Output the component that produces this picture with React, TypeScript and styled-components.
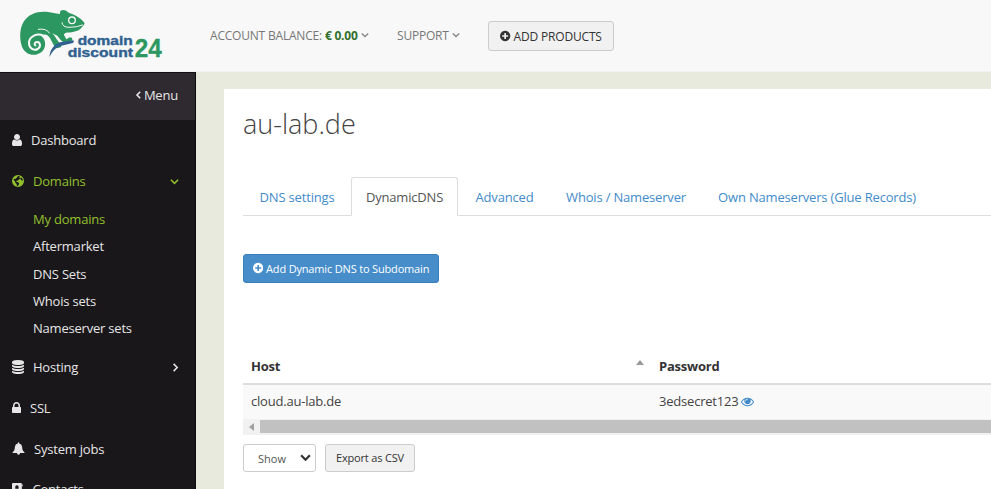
import React from "react";
import styled, { createGlobalStyle, css } from "styled-components";

const GlobalStyle = createGlobalStyle`
  * { box-sizing: border-box; }
  html, body { margin: 0; padding: 0; overflow: hidden; }
  body { font-family: "Open Sans", "Noto Sans", sans-serif; font-size: 13px; letter-spacing: -0.21px; color: #444; background: #e7eadd; }
  ul { list-style: none; margin: 0; padding: 0; }
`;

const icons = {
  user: { x: 256, w: 1280, d: "M1536 1399q0 109-62.5 187t-150.5 78h-854q-88 0-150.5-78t-62.5-187q0-85 8.5-160.5t31.5-152 58.5-131 94-89 134.5-34.5q131 128 313 128t313-128q76 0 134.5 34.5t94 89 58.5 131 31.5 152 8.5 160.5zm-256-887q0 159-112.5 271.5t-271.5 112.5-271.5-112.5-112.5-271.5 112.5-271.5 271.5-112.5 271.5 112.5 112.5 271.5z" },
  plus: { x: 128, w: 1536, d: "M1344 960v-128q0-26-19-45t-45-19h-256v-256q0-26-19-45t-45-19h-128q-26 0-45 19t-19 45v256h-256q-26 0-45 19t-19 45v128q0 26 19 45t45 19h256v256q0 26 19 45t45 19h128q26 0 45-19t19-45v-256h256q26 0 45-19t19-45zm320-64q0 209-103 385.5t-279.5 279.5-385.5 103-385.5-103-279.5-279.5-103-385.5 103-385.5 279.5-279.5 385.5-103 385.5 103 279.5 279.5 103 385.5z" },
  eye: { x: 0, w: 1792, d: "M1664 960q-152-236-381-353 61 104 61 225 0 185-131.5 316.5t-316.5 131.5-316.5-131.5-131.5-316.5q0-121 61-225-229 117-381 353 133 205 333.5 326.5t434.5 121.5 434.5-121.5 333.5-326.5zm-720-384q0-20-14-34t-34-14q-125 0-214.5 89.5t-89.5 214.5q0 20 14 34t34 14 34-14 14-34q0-86 61-147t147-61q20 0 34-14t14-34zm848 384q0 34-20 69-140 230-376.5 368.5t-499.5 138.5-499.5-139-376.5-368q-20-35-20-69t20-69q140-229 376.5-368t499.5-139 499.5 139 376.5 368q20 35 20 69z" },
  lock: { x: 320, w: 1152, d: "M640 768h512v-192q0-106-75-181t-181-75-181 75-75 181v192zm832 96v576q0 40-28 68t-68 28h-960q-40 0-68-28t-28-68v-576q0-40 28-68t68-28h32v-192q0-184 132-316t316-132 316 132 132 316v192h32q40 0 68 28t28 68z" },
  database: { x: 128, w: 1536, d: "M896 768q237 0 443-43t325-127v170q0 69-103 128t-280 93.5-385 34.5-385-34.5-280-93.5-103-128v-170q119 84 325 127t443 43zm0 768q237 0 443-43t325-127v170q0 69-103 128t-280 93.5-385 34.5-385-34.5-280-93.5-103-128v-170q119 84 325 127t443 43zm0-384q237 0 443-43t325-127v170q0 69-103 128t-280 93.5-385 34.5-385-34.5-280-93.5-103-128v-170q119 84 325 127t443 43zm0-1152q208 0 385 34.5t280 93.5 103 128v128q0 69-103 128t-280 93.5-385 34.5-385-34.5-280-93.5-103-128v-128q0-69 103-128t280-93.5 385-34.5z" },
  bell: { x: 64, w: 1664, d: "M896 40q70 0 90 70v80q330 60 370 420 10 240 70 420 70 160 230 290v100h-560q0 190-200 210-200-20-200-210h-560v-100q160-130 230-290 60-180 70-420 40-360 370-420v-80q20-70 90-70z" },
  globe: { x: 128, w: 1536, d: "M896 128a768 768 0 1 0 0 1536a768 768 0 1 0 0-1536z M880 250l240 50-60 150 130 90-160 180-150 50-70 160-170-90 20 130 180 60 210 110-40 190-170 230-90-30-20-240-160-150-60-200-170-170 40-160 200 30 90-130 110-60z M1270 420l190 190 60 250-150-40-130-130-30-160z" },
  contacts: { x: 230, w: 1460, d: "M360 128h1000q130 0 130 130v1278q0 130-130 130h-1000q-130 0-130-130v-1278q0-130 130-130z M860 430a220 220 0 1 0 1 0z M480 1280h770q0-420-210-450-180 130-350 0-210 30-210 450z M1560 300h130v290h-130z" },
} as const;

type IconName = keyof typeof icons;

const IconSvg = styled.svg`
  display: block;
  flex: none;
  fill: currentColor;
`;

function Icon({ name, size }: { name: IconName; size: number }) {
  const { x, w, d } = icons[name];
  return (
    <IconSvg width={(size * w) / 1792} height={size} viewBox={`${x} 0 ${w} 1792`}>
      <path fillRule="evenodd" d={d} />
    </IconSvg>
  );
}

function Chevron({ dir, size = 8, weight = 1.7 }: { dir: "left" | "right" | "down"; size?: number; weight?: number }) {
  const d = { left: "M6.5 1 2.5 5l4 4", right: "M4 1l4 4-4 4", down: "M1 3l4 4 4-4" }[dir];
  return (
    <IconSvg width={size} height={size} viewBox="0 0 10 10">
      <path d={d} fill="none" stroke="currentColor" strokeWidth={weight} />
    </IconSvg>
  );
}

const Page = styled.div`
  height: 489px;
  display: flex;
  flex-direction: column;
  overflow: hidden;
`;

const Header = styled.header`
  height: 72px;
  flex: none;
  display: flex;
  background: #f8f8f8;
  border-bottom: 1px solid #f0f1ec;
`;

const LogoSvg = styled.svg`
  display: block;
  flex: none;
  letter-spacing: 0;
  font-family: "Liberation Sans", Arial, sans-serif;
  font-weight: 700;
`;

const TopLink = styled.a<{ $width: number }>`
  display: flex;
  align-items: center;
  width: ${(p) => p.$width}px;
  height: 70px;
  font-size: 12px;
  letter-spacing: -0.2px;
  color: #777;
  white-space: pre;
  svg { margin-left: 3px; color: #888; }
`;

const Balance = styled.b`
  color: #31702f;
  font-weight: 700;
`;

const Button = styled.button<{ $kind: "plain" | "primary" | "small" }>`
  display: flex;
  align-items: center;
  justify-content: center;
  gap: 3px;
  padding: 0;
  font-family: inherit;
  letter-spacing: -0.17px;
  border-radius: 3px;
  white-space: nowrap;
  background: #f1f1f1;
  border: 1px solid #ccc;
  color: #333;
  ${(p) => p.$kind === "plain" && css`width: 126px; height: 30px; margin-top: 21px; font-size: 12px;`}
  ${(p) => p.$kind === "primary" && css`
    width: 196px; height: 29px; font-size: 11px; padding-bottom: 1px;
    background: #468dca; border-color: #3a7fbc; color: #fff;
  `}
  ${(p) => p.$kind === "small" && css`width: 90px; height: 28px; font-size: 11px; padding-bottom: 1px;`}
`;

const Body = styled.div`
  flex: 1;
  display: flex;
  min-height: 0;
`;

const Sidebar = styled.nav`
  width: 196px;
  flex: none;
  background: #1a171a;
  border-top: 1px solid #151217;
  border-right: 1px solid #0c0a0d;
  color: #e6e6e6;
  overflow: hidden;
`;

const MenuToggle = styled.div`
  height: 47px;
  display: flex;
  align-items: center;
  justify-content: flex-end;
  gap: 1px;
  padding: 0 17px 3px 0;
  background: #2f2930;
`;

const NavItem = styled.li<{ $active?: boolean }>`
  height: 40.7px;
  display: flex;
  align-items: center;
  gap: 9px;
  padding: 0 16px 0 12px;
  color: ${(p) => (p.$active ? "#93c02d" : "#e6e6e6")};
`;

const NavLabel = styled.span`
  flex: 1;
`;

const SubNav = styled.ul`
  padding: 5px 0 5px 33px;
`;

const SubItem = styled.li<{ $active?: boolean }>`
  height: 27.1px;
  line-height: 27px;
  color: ${(p) => (p.$active ? "#93c02d" : "#e6e6e6")};
`;

const Content = styled.main`
  flex: 1;
  min-width: 0;
  padding: 17px 0 0 28px;
  background: #e7eadd;
  display: flex;
`;

const Panel = styled.section`
  flex: 1;
  min-width: 0;
  background: #fff;
  padding-left: 19px;
`;

const Title = styled.h1`
  margin: 0;
  height: 88px;
  padding-top: 16px;
  font-size: 27px;
  letter-spacing: 0;
  line-height: 37px;
  font-weight: 300;
  color: #444;
`;

const Tabs = styled.div`
  display: flex;
  height: 39px;
  margin-bottom: 38px;
  border-bottom: 1px solid #ddd;
  letter-spacing: -0.18px;
`;

const Tab = styled.a<{ $active?: boolean; $width: number }>`
  width: ${(p) => p.$width}px;
  height: 39px;
  flex: none;
  display: flex;
  align-items: center;
  justify-content: center;
  padding-top: 1px;
  color: ${(p) => (p.$active ? "#555" : "#428bca")};
  border: 1px solid transparent;
  border-radius: 3px 3px 0 0;
  ${(p) => p.$active && css`
    background: #fff;
    border-color: #ddd #ddd #fff;
  `}
`;

const Row = styled.div<{ $head?: boolean }>`
  display: grid;
  grid-template-columns: 408px 1fr;
  align-items: center;
  height: ${(p) => (p.$head ? 36 : 34)}px;
  margin-top: ${(p) => (p.$head ? 66 : 0)}px;
  padding-bottom: ${(p) => (p.$head ? 0 : 2)}px;
  font-weight: ${(p) => (p.$head ? 700 : 400)};
  color: ${(p) => (p.$head ? "#333" : "#444")};
  background: ${(p) => (p.$head ? "#fff" : "#f9f9f9")};
  border-bottom: ${(p) => (p.$head ? "2px solid #ddd" : "none")};
`;

const Cell = styled.div`
  display: flex;
  align-items: center;
  gap: 3px;
  padding: 0 7px 0 8px;
  svg { color: #428bca; }
`;

const SortArrow = styled.i`
  margin: 0 0 7px auto;
  border: 4px solid transparent;
  border-top: 0;
  border-bottom: 5px solid #999;
`;

const ScrollTrack = styled.div`
  height: 16px;
  display: flex;
  align-items: center;
  padding-bottom: 1px;
  background: #f1f1f1;
`;

const ScrollArrow = styled.i`
  margin: 0 6px 0 6px;
  border: 4px solid transparent;
  border-left: 0;
  border-right: 5px solid #a0a0a0;
`;

const ScrollThumb = styled.div`
  flex: 1;
  height: 13px;
  background: #c1c1c1;
`;

const Footer = styled.div`
  display: flex;
  gap: 9px;
  margin-top: 9px;
`;

const Select = styled.div`
  width: 73px;
  height: 28px;
  display: flex;
  align-items: center;
  justify-content: space-between;
  padding: 1px 4px 0 14px;
  border: 1px solid #ccc;
  border-radius: 3px;
  font-size: 11px;
  letter-spacing: 0;
  color: #555;
  svg { color: #333; margin-bottom: 2px; }
`;

function Logo() {
  return (
    <LogoSvg width="210" height="72" viewBox="0 0 630 216">
      <path
        fill="#2c9760"
        d="M180 42C179 35 181 31 188 30C196 30 202 34 206 38C226 44 242 54 252 67Q256 72 251 76L241 87C231 95 212 98 198 98Q191 100 192 105L199 118L209 112Q217 112 217 119L212 126L190 127Q182 121 172 107L157 100Q163 106 169 116L183 135L184 141L171 145L162 137L150 114C144 106 138 103 133 104C124 105 121 107 127 111C138 121 139 143 126 155C105 172 76 165 66 140C57 113 60 85 70 67C86 38 119 32 145 36Q167 40 180 42Z"
      />
      <g fill="none" stroke="#f8f8f8" strokeLinecap="round">
        <path strokeWidth="6" d="M131 107C109 98 87 110 87 129C87 146 102 153 113 147C124 140 121 126 111 126C104 126 102 132 106 136" />
        <path strokeWidth="3" d="M115 88Q140 84 148 99" />
        <path strokeWidth="3" d="M186 68C187 77 194 82 207 82Q231 82 248 75" />
      </g>
      <circle cx="216" cy="61" r="10" fill="#2c9760" stroke="#f8f8f8" strokeWidth="4" />
      <path fill="#30618f" d="M148 172C151 146 162 135 180 127L220 121Q224 124 219 129L184 137C167 144 158 151 148 172Z" />
      <g fill="#30618f" stroke="#30618f" strokeWidth="1.2" fontSize="39">
        <text x="233" y="136" textLength="165" lengthAdjust="spacingAndGlyphs">domain</text>
        <text x="203" y="171" textLength="196" lengthAdjust="spacingAndGlyphs">discount</text>
      </g>
      <text x="404" y="171" fontSize="77" fill="#2c9760" stroke="#2c9760" textLength="81" lengthAdjust="spacingAndGlyphs">24</text>
    </LogoSvg>
  );
}

const nav: { label: string; icon: IconName; active?: boolean; chevron?: "down" | "right"; children?: string[] }[] = [
  { label: "Dashboard", icon: "user" },
  { label: "Domains", icon: "globe", active: true, chevron: "down", children: ["My domains", "Aftermarket", "DNS Sets", "Whois sets", "Nameserver sets"] },
  { label: "Hosting", icon: "database", chevron: "right" },
  { label: "SSL", icon: "lock" },
  { label: "System jobs", icon: "bell" },
  { label: "Contacts", icon: "contacts" },
];

const tabs = [
  { label: "DNS settings", width: 108 },
  { label: "DynamicDNS", width: 107, active: true },
  { label: "Advanced", width: 93 },
  { label: "Whois / Nameserver", width: 150 },
  { label: "Own Nameservers (Glue Records)", width: 232 },
];

export default function App() {
  return (
    <Page>
      <GlobalStyle />
      <Header>
        <Logo />
        <TopLink $width={187}>ACCOUNT BALANCE: <Balance>€ 0.00</Balance><Chevron dir="down" /></TopLink>
        <TopLink $width={91}>SUPPORT<Chevron dir="down" /></TopLink>
        <Button $kind="plain"><Icon name="plus" size={12} />ADD PRODUCTS</Button>
      </Header>
      <Body>
        <Sidebar>
          <MenuToggle><Chevron dir="left" size={8} weight={2} />Menu</MenuToggle>
          <ul>
            {nav.map((item) => (
              <React.Fragment key={item.label}>
                <NavItem $active={item.active}>
                  <Icon name={item.icon} size={14} />
                  <NavLabel>{item.label}</NavLabel>
                  {item.chevron && <Chevron dir={item.chevron} size={9} />}
                </NavItem>
                {item.children && (
                  <SubNav>
                    {item.children.map((c, i) => <SubItem key={c} $active={i === 0}>{c}</SubItem>)}
                  </SubNav>
                )}
              </React.Fragment>
            ))}
          </ul>
        </Sidebar>
        <Content>
          <Panel>
            <Title>au-lab.de</Title>
            <Tabs>
              {tabs.map((t) => <Tab key={t.label} $width={t.width} $active={t.active}>{t.label}</Tab>)}
            </Tabs>
            <Button $kind="primary"><Icon name="plus" size={12} />Add Dynamic DNS to Subdomain</Button>
            <Row $head>
              <Cell>Host<SortArrow /></Cell>
              <Cell>Password</Cell>
            </Row>
            <Row>
              <Cell>cloud.au-lab.de</Cell>
              <Cell>3edsecret123<Icon name="eye" size={13} /></Cell>
            </Row>
            <ScrollTrack><ScrollArrow /><ScrollThumb /></ScrollTrack>
            <Footer>
              <Select>Show<Chevron dir="down" size={11} weight={2} /></Select>
              <Button $kind="small">Export as CSV</Button>
            </Footer>
          </Panel>
        </Content>
      </Body>
    </Page>
  );
}
